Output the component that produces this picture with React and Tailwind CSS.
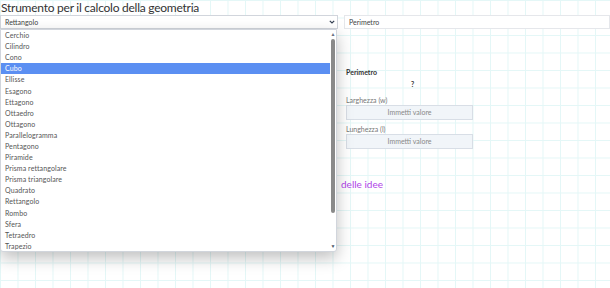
import React from "react";

const shapes = [
  "Cerchio",
  "Cilindro",
  "Cono",
  "Cubo",
  "Ellisse",
  "Esagono",
  "Ettagono",
  "Ottaedro",
  "Ottagono",
  "Parallelogramma",
  "Pentagono",
  "Piramide",
  "Prisma rettangolare",
  "Prisma triangolare",
  "Quadrato",
  "Rettangolo",
  "Rombo",
  "Sfera",
  "Tetraedro",
  "Trapezio",
];

const Chevron = () => (
  <svg width="6" height="4" viewBox="0 0 6 4" className="text-gray-700">
    <path d="M0.8 0.8 L3 3 L5.2 0.8" fill="none" stroke="currentColor" strokeWidth="1.2" />
  </svg>
);

const ShapeList = () => (
  <div className="absolute left-0 top-[29px] w-[337px] h-[223px] bg-white border border-gray-300 rounded-b-[3px] shadow-[0_6px_16px_rgba(0,0,0,0.25)] flex">
    <ul className="flex-1">
      {shapes.map((s) => (
        <li
          key={s}
          className={
            "h-[11.1px] flex items-center pl-[4px] text-[7px] leading-none tracking-[0.1px] " +
            (s === "Cubo" ? "bg-[#5b8ff2] text-white" : "text-[#555]")
          }
        >
          {s}
        </li>
      ))}
    </ul>
    {/* scrollbar */}
    <div className="w-[6px] flex flex-col items-center py-[2px]">
      <span className="text-[5px] leading-none text-gray-500">▲</span>
      <div className="w-[4px] h-[174px] mt-[2px] bg-[#8a8a8a] rounded-[2px]" />
      <div className="flex-1" />
      <span className="text-[5px] leading-none text-gray-600">▼</span>
    </div>
  </div>
);

export default function App() {
  return (
    <div
      className="relative w-[610px] h-[288px] overflow-hidden bg-white bg-[linear-gradient(to_right,#e4f7f7_1px,transparent_1px),linear-gradient(to_bottom,#e4f7f7_1px,transparent_1px)] bg-[size:17.5px_17.5px] text-[#333]"
      style={{ fontFamily: "Lato, 'Open Sans', sans-serif" }}
    >
      <h1 className="text-[12px] leading-[15px] pl-[1px] tracking-[-0.25px] text-[#333]">
        Strumento per il calcolo della geometria
      </h1>

      <div className="flex gap-[6px]">
        <div className="w-[338px] h-[14px] bg-white border border-gray-300 flex items-center justify-between pl-[4px] pr-[2px]">
          <span className="text-[7px] text-[#444]">Rettangolo</span>
          <Chevron />
        </div>
        <div className="flex-1 h-[14px] bg-white border border-gray-200 flex items-center pl-[4px]">
          <span className="text-[7px] text-[#444]">Perimetro</span>
        </div>
      </div>

      <div className="flex">
        <div className="w-[341px]" />
        <div className="flex-1 pt-[39px]">
          <div className="pl-[5px] w-[132px]">
            <p className="text-[7px] leading-[9px] font-bold text-[#333]">Perimetro</p>
            <p className="text-[7px] leading-[9px] font-bold text-center mt-[3px] pl-[6px]">?</p>

            <label className="block text-[7px] leading-[9px] text-[#777] mt-[7px]">Larghezza (w)</label>
            <div className="h-[15px] bg-[#f1f5f9] border border-[#d8dee6] flex items-center justify-center text-[7px] text-[#888]">
              Immetti valore
            </div>

            <label className="block text-[7px] leading-[9px] text-[#777] mt-[5px]">Lunghezza (l)</label>
            <div className="h-[15px] bg-[#f1f5f9] border border-[#d8dee6] flex items-center justify-center text-[7px] text-[#888]">
              Immetti valore
            </div>
          </div>

          <p className="text-[10px] leading-[12px] text-[#b044e8] mt-[29px]">delle idee</p>
        </div>
      </div>

      <ShapeList />
    </div>
  );
}
